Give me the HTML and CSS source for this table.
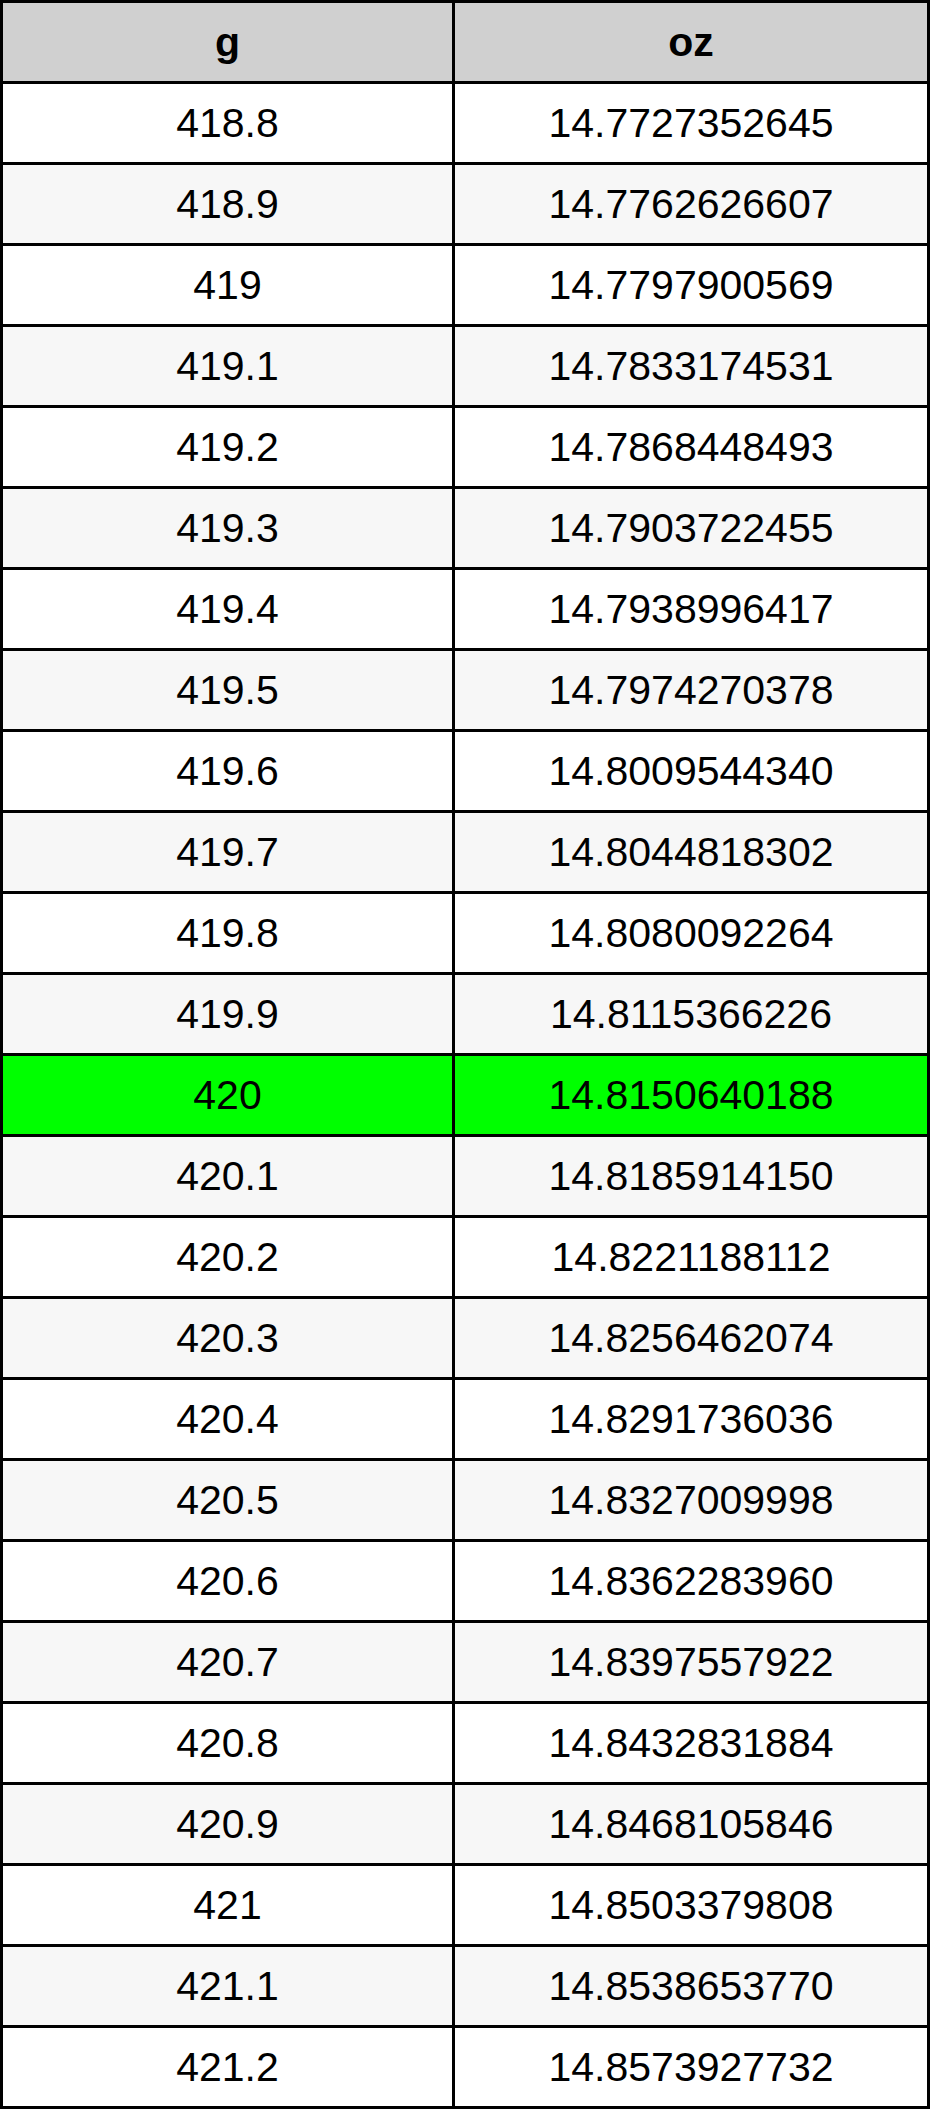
FILE: index.html
```html
<!DOCTYPE html>
<html>
<head>
<meta charset="utf-8">
<title>g to oz</title>
<link rel="stylesheet" href="styles.css">
</head>
<body>
<table class="conv">
<colgroup><col class="c1"><col class="c2"></colgroup>
<thead>
<tr><th>g</th><th>oz</th></tr>
</thead>
<tbody>
<tr><td>418.8</td><td>14.7727352645</td></tr>
<tr><td>418.9</td><td>14.7762626607</td></tr>
<tr><td>419</td><td>14.7797900569</td></tr>
<tr><td>419.1</td><td>14.7833174531</td></tr>
<tr><td>419.2</td><td>14.7868448493</td></tr>
<tr><td>419.3</td><td>14.7903722455</td></tr>
<tr><td>419.4</td><td>14.7938996417</td></tr>
<tr><td>419.5</td><td>14.7974270378</td></tr>
<tr><td>419.6</td><td>14.8009544340</td></tr>
<tr><td>419.7</td><td>14.8044818302</td></tr>
<tr><td>419.8</td><td>14.8080092264</td></tr>
<tr><td>419.9</td><td>14.8115366226</td></tr>
<tr class="hl"><td>420</td><td>14.8150640188</td></tr>
<tr><td>420.1</td><td>14.8185914150</td></tr>
<tr><td>420.2</td><td>14.8221188112</td></tr>
<tr><td>420.3</td><td>14.8256462074</td></tr>
<tr><td>420.4</td><td>14.8291736036</td></tr>
<tr><td>420.5</td><td>14.8327009998</td></tr>
<tr><td>420.6</td><td>14.8362283960</td></tr>
<tr><td>420.7</td><td>14.8397557922</td></tr>
<tr><td>420.8</td><td>14.8432831884</td></tr>
<tr><td>420.9</td><td>14.8468105846</td></tr>
<tr><td>421</td><td>14.8503379808</td></tr>
<tr><td>421.1</td><td>14.8538653770</td></tr>
<tr><td>421.2</td><td>14.8573927732</td></tr>
</tbody>
</table>
</body>
</html>
```

FILE: styles.css
```css
html, body {
  margin: 0;
  padding: 0;
  background: #ffffff;
}

.conv {
  width: 930px;
  table-layout: fixed;
  border-collapse: separate;
  border-spacing: 3px;
  background: #000000;
  font-family: "Liberation Sans", Arial, sans-serif;
  font-size: 41px;
  color: #000000;
}

.conv .c1 { width: 449px; }
.conv .c2 { width: 472px; }

.conv th,
.conv td {
  height: 78px;
  padding: 0;
  text-align: center;
  vertical-align: middle;
  line-height: 1;
}

.conv th {
  background: #d0d0d0;
  font-weight: bold;
}

.conv tbody tr:nth-child(odd) td { background: #ffffff; }
.conv tbody tr:nth-child(even) td { background: #f7f7f7; }
.conv tbody tr.hl td { background: #00ff00; }
```
